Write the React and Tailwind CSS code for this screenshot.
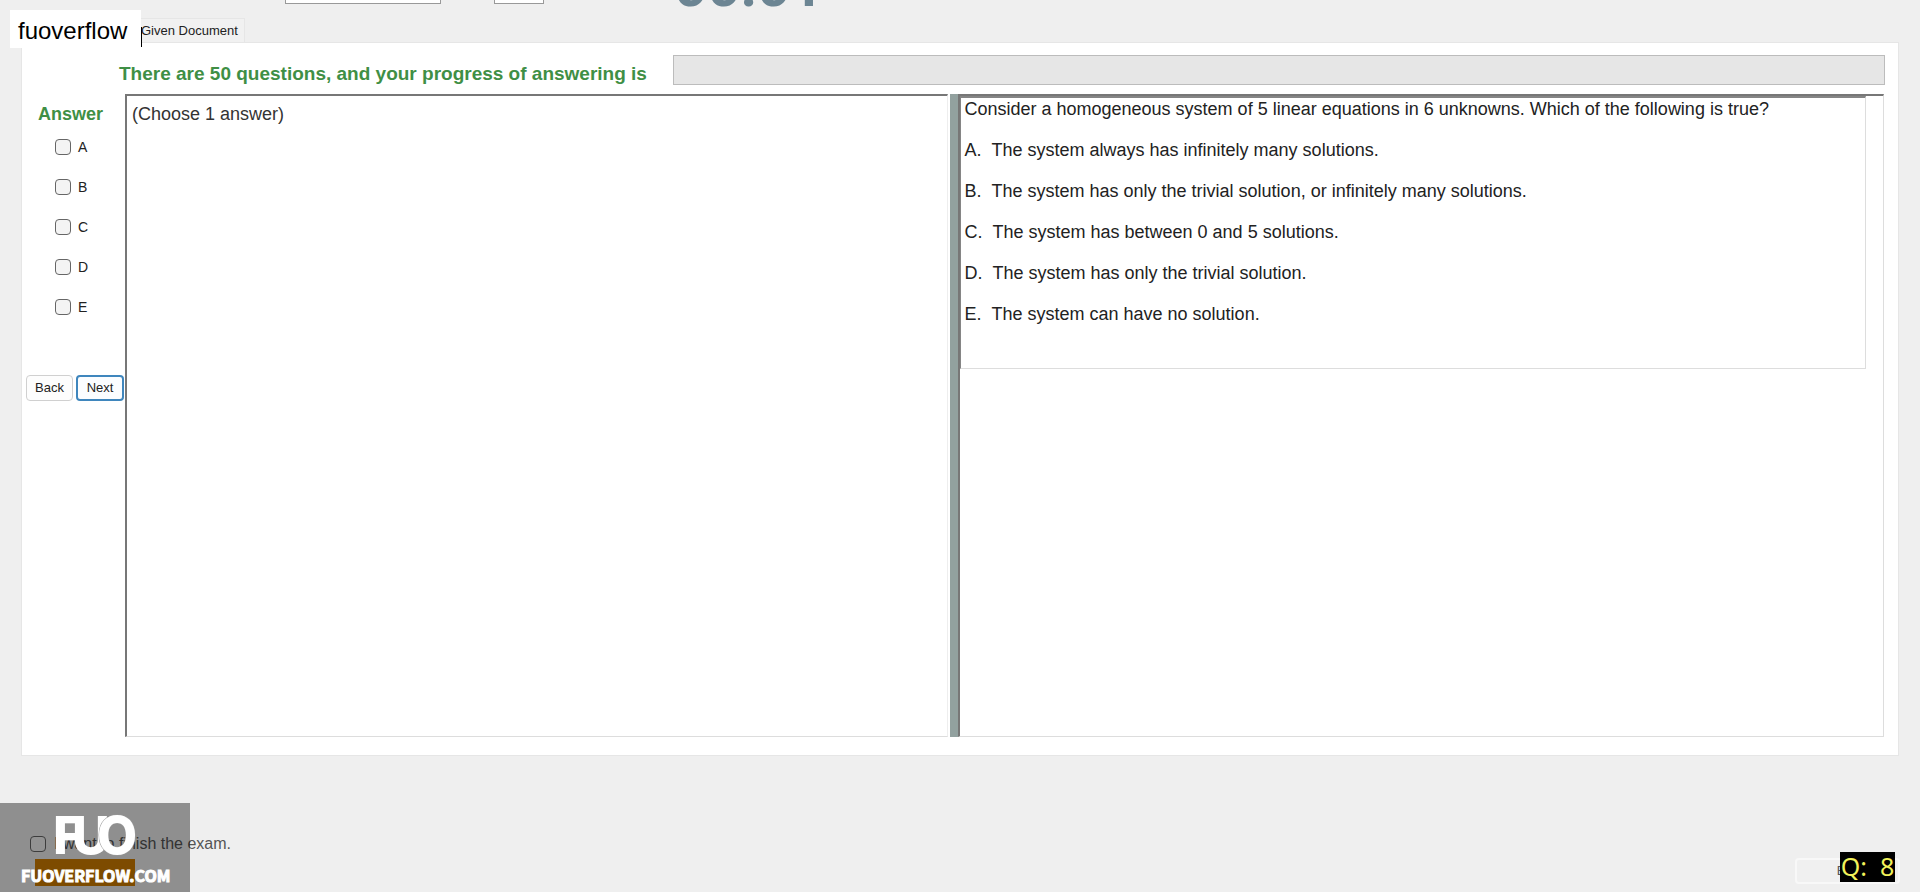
import { useState } from 'react';

const CHOICES = ['A', 'B', 'C', 'D', 'E'];

const OPTIONS = [
  { key: 'A', text: 'The system always has infinitely many solutions.' },
  { key: 'B', text: 'The system has only the trivial solution, or infinitely many solutions.' },
  { key: 'C', text: 'The system has between 0 and 5 solutions.' },
  { key: 'D', text: 'The system has only the trivial solution.' },
  { key: 'E', text: 'The system can have no solution.' },
];

export default function App() {
  const [selected, setSelected] = useState([]);

  function toggle(choice) {
    setSelected((prev) => (prev.includes(choice) ? prev.filter((c) => c !== choice) : [...prev, choice]));
  }

  return (
    <div className="relative flex min-h-screen flex-col overflow-hidden bg-[#efefef] font-['Liberation_Sans',Arial,sans-serif] text-[#222]">
      <Toolbar />

      <div className="flex items-end pl-[141px]">
        <button type="button" className="h-6 border-t border-r border-[#e6e6e6] bg-[#f1f1f1] pr-[6px] text-[13px] leading-none">
          Given Document
        </button>
      </div>

      <main className="mr-[21px] ml-[21px] border border-[#e6e6e6] bg-white pr-[13px] pb-[18px]">
        <div className="flex h-[51px] items-start pt-3">
          <span id="progress-label" className="w-[651px] shrink-0 pl-[97px] text-[19px] leading-[38px] font-bold whitespace-nowrap text-[#3f8f45]">
            There are 50 questions, and your progress of answering is
          </span>
          <div role="progressbar" aria-labelledby="progress-label" aria-valuenow={0} className="h-[30px] flex-1 border border-[#bcbcbc] bg-[#e6e6e6]" />
        </div>

        <div className="flex h-[643px] pr-px">
          <aside className="w-[103px] shrink-0">
            <h2 className="pt-2 pl-4 text-[18px] leading-6 font-bold text-[#3f8f45]">Answer</h2>
            <div className="flex flex-col pt-px pl-[33px]">
              {CHOICES.map((choice) => (
                <label key={choice} className="flex h-10 items-center gap-[7px] text-[14px]">
                  <CheckBox checked={selected.includes(choice)} onChange={() => toggle(choice)} />
                  {choice}
                </label>
              ))}
            </div>
            <div className="flex gap-[3px] pt-12 pl-1">
              <button type="button" className="h-[26px] w-[47px] rounded-[4px] border border-[#d0d0d0] bg-[#fdfdfd] text-[13px]">
                Back
              </button>
              <button type="button" className="h-[26px] w-12 rounded-[4px] border-2 border-[#3f86bd] bg-[#fbfdff] text-[13px]">
                Next
              </button>
            </div>
          </aside>

          <section className="mr-[2px] min-w-0 flex-[815] border-t-2 border-r border-b border-l-2 border-t-[#777] border-r-[#eee] border-b-[#ddd] border-l-[#777] pt-[6px] pl-[5px] text-[18px] leading-6 text-[#333]">
            (Choose 1 answer)
          </section>

          <div className="w-[8px] shrink-0 bg-[#92a19f]" />

          <section className="min-w-0 flex-[905] border-t-2 border-r border-b border-l-2 border-t-[#777] border-r-[#ddd] border-b-[#ddd] border-l-[#777] pr-[17px]">
            <Question />
          </section>
        </div>
      </main>

      <footer className="flex flex-1 items-end justify-between pr-5 pb-2 pl-[30px]">
        <label className="mb-7 flex items-center gap-2 text-[16px] text-[#555]">
          <CheckBox />
          I want to finish the exam.
        </label>
        <button type="button" className="h-[26px] w-[105px] rounded-[4px] border-2 border-[#f8f8f8] bg-[#f0f0f0] text-[13px] text-[#555]">
          Exit
        </button>
      </footer>

      <div className="absolute top-[10px] left-[10px] flex h-[38px] w-[131px] items-center bg-white pt-1 pl-2 text-[24px] leading-none text-black">
        fuoverflow
      </div>
      <div className="absolute top-[27px] left-[141px] h-5 w-px bg-black" />
      <Watermark />
      <div className="absolute right-[25px] bottom-[10px] flex h-[30px] w-[55px] items-center justify-center bg-black font-['Noto_Sans',sans-serif] text-[25px] whitespace-pre text-[#f2f25a]">
        {'Q:  8'}
      </div>
    </div>
  );
}

function Toolbar() {
  return (
    <div className="flex h-[18px] items-start overflow-hidden pl-[285px]">
      <div className="flex h-1 items-end">
        <select aria-label="Font" className="h-7 w-[156px] border border-[#999] bg-white" />
        <select aria-label="Size" className="ml-[53px] h-7 w-[50px] border border-[#999] bg-white" />
        <div className="ml-[130px] font-['Roboto',sans-serif] text-[58px] leading-9 font-bold text-[#6c8593]">00:01</div>
      </div>
    </div>
  );
}

function Question() {
  return (
    <article className="flex h-[273px] flex-col border-t-2 border-r border-b border-l border-t-[#858585] border-r-[#ddd] border-b-[#ddd] border-l-[#858585] pl-[3px] text-[18px] leading-[22px]">
      <p>Consider a homogeneous system of 5 linear equations in 6 unknowns. Which of the following is true?</p>
      {OPTIONS.map((option) => (
        <p key={option.key} className="mt-[19px] flex gap-[10px]">
          <span>{option.key}.</span>
          <span>{option.text}</span>
        </p>
      ))}
    </article>
  );
}

function CheckBox(props) {
  return (
    <input
      type="checkbox"
      className="h-4 w-4 appearance-none rounded-[4px] border border-[#666] bg-[#f4f4f4] checked:bg-[#3f86bd]"
      {...props}
    />
  );
}

function Watermark() {
  return (
    <div className="absolute bottom-0 left-0 h-[89px] w-[190px] bg-black/40">
      <svg viewBox="0 0 190 89" className="h-full w-full" aria-label="FUO">
        <rect x="35" y="56" width="100" height="27" fill="#7d4b00" />
        <g fill="#fff" fontFamily="Inter, sans-serif" fontWeight="800" fontSize="52">
          <text x="53" y="51">F</text>
          <text x="72" y="51">U</text>
          <text x="97" y="51" stroke="#999" strokeWidth="1" paintOrder="stroke">O</text>
        </g>
        <text x="21" y="79" fontSize="16" fontFamily="Noto Sans CJK SC, sans-serif" fontWeight="700" fill="#fff" stroke="#fff" strokeWidth="1">
          FUOVERFLOW.COM
        </text>
      </svg>
    </div>
  );
}
